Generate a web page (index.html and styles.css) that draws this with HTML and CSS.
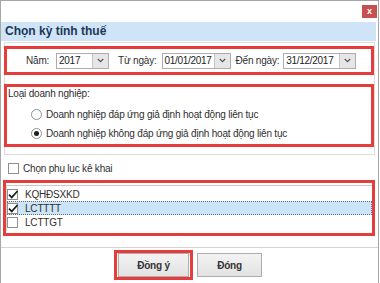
FILE: index.html
```html
<!DOCTYPE html>
<html lang="vi">
<head>
    <meta charset="UTF-8">
    <meta name="viewport" content="width=device-width, initial-scale=1.0">
    <title>Chọn kỳ tính thuế</title>
    <link rel="stylesheet" href="styles.css">
</head>
<body>
    <div class="window">
        <div class="topbar"><span class="close">x</span></div>
        <div class="title">Chọn kỳ tính thuế</div>

        <div class="content">
            <div class="panel">
                <!-- ky tinh thue -->
                <div class="mark period">
                    <span class="lbl lbl-year">Năm:</span>
                    <div class="combo combo-year">
                        <span class="val">2017</span>
                        <span class="arrow"><svg width="7" height="5" viewBox="0 0 7 5"><path d="M0.8 1 L3.5 3.7 L6.2 1" fill="none" stroke="#555" stroke-width="1.2"/></svg></span>
                    </div>
                    <span class="lbl lbl-from">Từ ngày:</span>
                    <div class="combo combo-from">
                        <span class="val">01/01/2017</span>
                        <span class="arrow"><svg width="7" height="5" viewBox="0 0 7 5"><path d="M0.8 1 L3.5 3.7 L6.2 1" fill="none" stroke="#555" stroke-width="1.2"/></svg></span>
                    </div>
                    <span class="lbl lbl-to">Đến ngày:</span>
                    <div class="combo combo-to">
                        <span class="val">31/12/2017</span>
                        <span class="arrow"><svg width="7" height="5" viewBox="0 0 7 5"><path d="M0.8 1 L3.5 3.7 L6.2 1" fill="none" stroke="#555" stroke-width="1.2"/></svg></span>
                    </div>
                </div>

                <!-- loai doanh nghiep -->
                <div class="mark kind">
                    <div class="legend">Loại doanh nghiệp:</div>
                    <div class="radio-row row-1"><span class="radio"></span>Doanh nghiệp đáp ứng giả định hoạt động liên tục</div>
                    <div class="radio-row row-2"><span class="radio on"></span>Doanh nghiệp không đáp ứng giả định hoạt động liên tục</div>
                </div>
            </div>

            <div class="check-row appendix"><span class="box"></span>Chọn phụ lục kê khai</div>

            <div class="mark list-mark">
                <div class="listbox">
                    <div class="item">
                        <span class="box"><svg width="13" height="11" viewBox="0 0 13 11"><path d="M2 5.6 L4.8 8.4 L10.5 2" fill="none" stroke="#1e1e1e" stroke-width="1.7"/></svg></span>KQHĐSXKD
                    </div>
                    <div class="item selected">
                        <span class="box"><svg width="13" height="11" viewBox="0 0 13 11"><path d="M2 5.6 L4.8 8.4 L10.5 2" fill="none" stroke="#1e1e1e" stroke-width="1.7"/></svg></span>LCTTTT
                    </div>
                    <div class="item">
                        <span class="box"></span>LCTTGT
                    </div>
                </div>
            </div>
        </div>

        <div class="footer">
            <span class="mark-btn"><button class="btn btn-ok">Đồng ý</button></span>
            <button class="btn btn-close">Đóng</button>
        </div>
    </div>
</body>
</html>
```

FILE: styles.css
```css
html,
body {
    margin: 0;
    padding: 0;
    background-color: #ffffff;
}

body {
    font-family: "Liberation Sans", Arial, sans-serif;
    font-size: 10px;
    color: #2f2f2f;
    letter-spacing: -0.2px;
}

.window {
    width: 377px;
    height: 282px;
    border: 1px solid #a6a6a6;
    border-bottom: none;
    overflow: hidden;
}

.topbar {
    height: 21px;
    display: flex;
    justify-content: flex-end;
    align-items: flex-start;
}

.close {
    display: block;
    width: 15px;
    height: 13px;
    margin: 4px 1px 0 0;
    background-color: #c75050;
    color: #fff;
    font-size: 9px;
    font-weight: bold;
    line-height: 12px;
    text-align: center;
    letter-spacing: 0;
}

.title {
    height: 19px;
    line-height: 19px;
    margin-right: 2px;
    padding-left: 4px;
    background-color: #cfe4f7;
    font-size: 12px;
    font-weight: bold;
    color: #1c3654;
    letter-spacing: 0;
}

.content {
    padding: 1px 3px 0 3px;
}

.panel {
    width: 369px;
    border: 1px solid #dcdcdc;
    padding: 3px 0 7px 0;
}

/* khung do danh dau */
.mark {
    border: 3px solid #e63c3c;
    margin-left: -1px;
}

.period {
    height: 23px;
    display: flex;
    align-items: center;
    padding-left: 19px;
}

.lbl {
    white-space: nowrap;
}

.lbl-year {
    margin-right: 7px;
}

.lbl-from {
    margin: 0 5px 0 9px;
}

.lbl-to {
    margin: 0 4px 0 5px;
}

.combo {
    display: flex;
    height: 16px;
    box-sizing: border-box;
    border: 1px solid #abadb3;
    background-color: #fff;
}

.combo .val {
    flex: 1;
    padding-left: 2px;
    line-height: 14px;
    font-size: 10px;
    letter-spacing: -0.3px;
    color: #222;
}

.combo .arrow {
    width: 15px;
    display: flex;
    align-items: center;
    justify-content: center;
    background-color: #e6e6e6;
    border-left: 1px solid #c6c6c6;
}

.combo-year {
    width: 53px;
}

.combo-from {
    width: 69px;
}

.combo-to {
    width: 73px;
}

.kind {
    margin-top: 9px;
    padding: 0 0 4px 1px;
}

.legend {
    line-height: 14px;
}

.radio-row {
    display: flex;
    align-items: center;
    height: 14px;
    padding-left: 23px;
}

.row-1 {
    margin-top: 6px;
}

.row-2 {
    margin-top: 5px;
}

.radio {
    position: relative;
    width: 11px;
    height: 11px;
    box-sizing: border-box;
    border: 1px solid #8f8f8f;
    border-radius: 50%;
    background-color: #fff;
    margin-right: 4px;
}

.radio.on::after {
    content: "";
    position: absolute;
    left: 2px;
    top: 2px;
    width: 5px;
    height: 5px;
    border-radius: 50%;
    background-color: #1f1f1f;
}

.box {
    position: relative;
    flex: none;
    width: 11px;
    height: 11px;
    box-sizing: border-box;
    border: 1px solid #8f8f8f;
    background-color: #fff;
}

.box svg {
    position: absolute;
    left: -1px;
    top: -1px;
}

.check-row {
    display: flex;
    align-items: center;
    gap: 4px;
    height: 14px;
    padding-left: 4px;
}

.appendix {
    margin-top: 6px;
}

.list-mark {
    margin-top: 5px;
    padding: 2px 0;
}

.listbox {
    border-top: 1px solid #c9c9c9;
    border-left: 1px solid #d6d6d6;
    padding: 1px 0 2px 0;
}

.item {
    display: flex;
    align-items: center;
    gap: 7px;
    height: 14px;
}

.item.selected {
    background-color: #cce4f7;
    outline: 1px dotted #6f6f6f;
    outline-offset: -1px;
}

.footer {
    margin-top: 11px;
    border-top: 1px solid #d4d4d4;
    padding: 2px 3px 0 0;
    display: flex;
    justify-content: center;
    align-items: flex-start;
}

.mark-btn {
    display: flex;
    border: 3px solid #e63c3c;
    padding: 0 1px;
    margin-right: 4px;
}

.btn {
    height: 24px;
    margin: 0;
    padding: 0;
    border: 1px solid #adadad;
    background: linear-gradient(#f3f3f3, #e2e2e2);
    font-family: "Liberation Sans", Arial, sans-serif;
    font-size: 10px;
    font-weight: bold;
    color: #333;
    letter-spacing: -0.2px;
}

.btn-ok {
    width: 71px;
}

.btn-close {
    width: 65px;
    margin-top: 3px;
}
```
